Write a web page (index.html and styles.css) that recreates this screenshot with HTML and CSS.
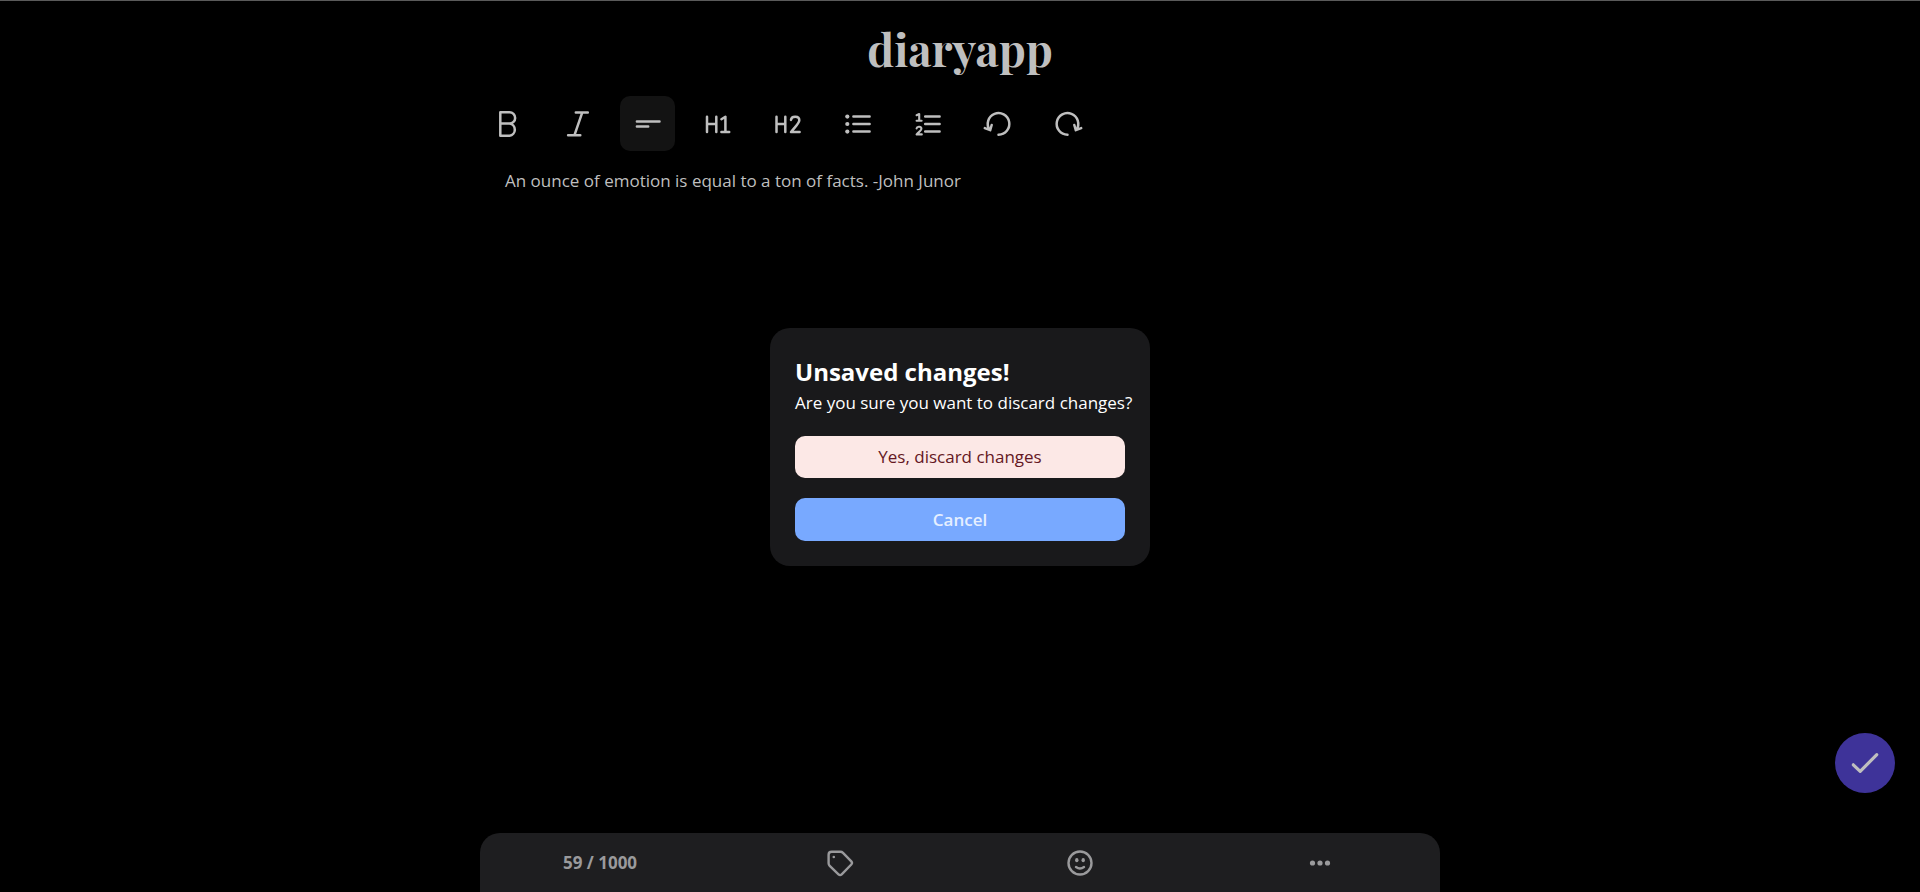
FILE: index.html
```html
<!DOCTYPE html>
<html lang="en">
<head>
<meta charset="utf-8">
<meta name="viewport" content="width=device-width, initial-scale=1">
<title>diaryapp</title>
<link rel="stylesheet" href="styles.css">
</head>
<body>
<div class="app">
  <header class="header"><h1 class="logo">diaryapp</h1></header>
  <main class="editor">
    <div class="toolbar" role="toolbar" aria-label="Formatting">
      <button class="tool" type="button" aria-label="Bold"><svg class="tool-icon" viewBox="0 0 55 55"><path d="M20.3 16.3V39.7M20.3 16.3H29.5A5.5 5.5 0 0 1 29.5 27.6H20.3M29.5 27.6A6.1 6.1 0 0 1 29.5 39.7H20.3"/></svg></button>
      <button class="tool" type="button" aria-label="Italic"><svg class="tool-icon" viewBox="0 0 55 55"><path d="M25.8 16.6H37.8M18.1 39.3H30.3M32.2 16.6L24.4 39.3"/></svg></button>
      <button class="tool tool-active" type="button" aria-label="Paragraph" aria-pressed="true"><svg class="tool-icon" viewBox="0 0 55 55"><path d="M16.9 25.4H39.5M16.9 30.6H28.2"/></svg></button>
      <button class="tool" type="button" aria-label="Heading 1"><svg class="tool-icon" viewBox="0 0 55 55"><path d="M17 20.7V36M26.3 20.7V36M17 28H26.3M31.4 23.2L35.4 20.7V36M31.4 36H39.2"/></svg></button>
      <button class="tool" type="button" aria-label="Heading 2"><svg class="tool-icon" viewBox="0 0 55 55"><path d="M16.5 20.7V36M25.3 20.7V36M16.5 28H25.3M31 23.9C31.4 19.6 39.3 19.6 39.3 24.3C39.3 27 36.8 29 31 36H39.6"/></svg></button>
      <button class="tool" type="button" aria-label="Bulleted list"><svg class="tool-icon" viewBox="0 0 55 55"><path d="M23.4 20.6H39.6M23.4 28H39.6M23.4 35.6H39.6"/><g class="solid"><circle cx="17.3" cy="20.6" r="2.1"/><circle cx="17.3" cy="28" r="2.1"/><circle cx="17.3" cy="35.6" r="2.1"/></g></svg></button>
      <button class="tool" type="button" aria-label="Numbered list"><svg class="tool-icon" viewBox="0 0 55 55"><path d="M25.2 20.6H39.6M25.2 28H39.6M25.2 35.6H39.6"/><path stroke-width="2.1" d="M16.6 19.2L19.2 18V24.8M16.6 24.8H21.6M16.6 32.4C17 30 21.6 30.2 21.4 33C21.3 34.6 18.8 35.8 16.6 38.4H21.8"/></svg></button>
      <button class="tool" type="button" aria-label="Undo"><svg class="tool-icon" viewBox="0 0 55 55"><path d="M28.5 38.7A10.8 10.8 0 1 0 19.5 33.8M14.8 32.1L20.2 34.2L21.7 29"/></svg></button>
      <button class="tool" type="button" aria-label="Redo"><svg class="tool-icon" viewBox="0 0 55 55"><path d="M27.5 38.7A10.8 10.8 0 1 1 36.5 33.8M41.2 32.1L35.8 34.2L34.3 29"/></svg></button>
    </div>
    <p class="entry" contenteditable="true">An ounce of emotion is equal to a ton of facts. -John Junor</p>
  </main>
  <footer class="bottom-bar">
    <span class="counter">59 / 1000</span>
    <button class="bar-button" type="button" aria-label="Tags"><svg class="bar-icon" viewBox="0 0 32 32"><path d="M4.6 7.7Q4.6 4.7 7.6 4.7H16.4Q17.9 4.7 19 5.8L27.3 14.4Q28.7 16 27.3 17.5L17.7 27.3Q16.1 28.8 14.5 27.3L5.7 18.8Q4.6 17.7 4.6 16.2Z"/><circle class="solid" cx="9.8" cy="10" r="1.3"/></svg></button>
    <button class="bar-button" type="button" aria-label="Mood"><svg class="bar-icon" viewBox="0 0 32 32"><circle cx="16" cy="16" r="11.5"/><path d="M12 20Q16 23 20 20"/><g class="solid"><ellipse cx="12.8" cy="13.2" rx="1.7" ry="2.1"/><ellipse cx="19.2" cy="13.2" rx="1.7" ry="2.1"/></g></svg></button>
    <button class="bar-button" type="button" aria-label="More"><svg class="bar-icon" viewBox="0 0 32 32"><g class="solid"><circle cx="8.5" cy="16" r="2.6"/><circle cx="16" cy="16" r="2.6"/><circle cx="23.5" cy="16" r="2.6"/></g></svg></button>
  </footer>
</div>
<button class="save" type="button" aria-label="Save"><svg class="save-icon" viewBox="0 0 60 60"><path d="M18.3 31.8L25.2 38.4L41.8 21.6"/></svg></button>
<div class="overlay">
  <section class="dialog" role="alertdialog" aria-modal="true" aria-labelledby="dialog-title" aria-describedby="dialog-text">
    <h2 class="dialog-title" id="dialog-title">Unsaved changes!</h2>
    <p class="dialog-text" id="dialog-text">Are you sure you want to discard changes?</p>
    <div class="dialog-actions">
      <button class="action action-discard" type="button">Yes, discard changes</button>
      <button class="action action-cancel" type="button">Cancel</button>
    </div>
  </section>
</div>
</body>
</html>
```

FILE: styles.css
```css
* {
  box-sizing: border-box;
}

body {
  margin: 0;
  background: #000;
  color: #bfbfbf;
  font-family: "Segoe UI", "Open Sans", "Noto Sans", sans-serif;
  font-size: 17px;
}

button {
  margin: 0;
  padding: 0;
  border: 0;
  background: none;
  color: inherit;
  font: inherit;
  cursor: pointer;
}

.app {
  display: flex;
  flex-direction: column;
  align-items: center;
  min-height: 100vh;
  border-top: 1px solid #5a5a5a;
}

.header {
  padding: 20px 0;
}

.logo {
  margin: 0;
  font-family: "Playfair Display", "Liberation Serif", serif;
  font-size: 45px;
  font-weight: 700;
  line-height: 55px;
}

.editor {
  flex: 1;
  width: 100%;
  max-width: 960px;
}

.toolbar {
  display: flex;
  flex-wrap: wrap;
  gap: 15px;
}

.tool {
  width: 55px;
  height: 55px;
  border-radius: 10px;
}

.tool-active {
  background: #131313;
}

svg {
  display: block;
  fill: none;
  stroke: currentColor;
  stroke-linecap: round;
  stroke-linejoin: round;
}

.solid {
  fill: currentColor;
  stroke: none;
}

.tool-icon {
  width: 100%;
  height: 100%;
  stroke-width: 2.5;
}

.entry {
  margin: 0;
  padding: 15px 25px;
  line-height: 30px;
  outline: 0;
}

.bottom-bar {
  display: grid;
  grid-template-columns: repeat(4, 1fr);
  align-items: center;
  justify-items: center;
  width: 100%;
  max-width: 960px;
  height: 59px;
  border-radius: 20px 20px 0 0;
  background: #1e1e20;
  color: #9a9a9c;
}

.counter {
  font-weight: 700;
}

.bar-icon {
  width: 32px;
  height: 32px;
  stroke-width: 2.4;
}

.save {
  position: fixed;
  right: 25px;
  bottom: 99px;
  width: 60px;
  height: 60px;
  border-radius: 50%;
  background: #3e3399;
}

.save-icon {
  stroke-width: 3.2;
}

.overlay {
  position: fixed;
  inset: 1px 0 0;
  display: flex;
  align-items: center;
  justify-content: center;
}

.dialog {
  width: 380px;
  padding: 25px;
  border-radius: 20px;
  background: #19191b;
  color: #fff;
}

.dialog-title {
  margin: 0;
  font-size: 24px;
  font-weight: 700;
  line-height: 38px;
}

.dialog-text {
  margin: 0;
  line-height: 24px;
  white-space: nowrap;
}

.dialog-actions {
  display: grid;
  gap: 20px;
  margin-top: 21px;
}

.action {
  min-height: 42px;
  border-radius: 10px;
}

.action-discard {
  background: #fce8e6;
  color: #641723;
  font-weight: 500;
}

.action-cancel {
  padding: 10px 0;
  background: #78a9ff;
  color: #e5efff;
  font-weight: 600;
}
```
